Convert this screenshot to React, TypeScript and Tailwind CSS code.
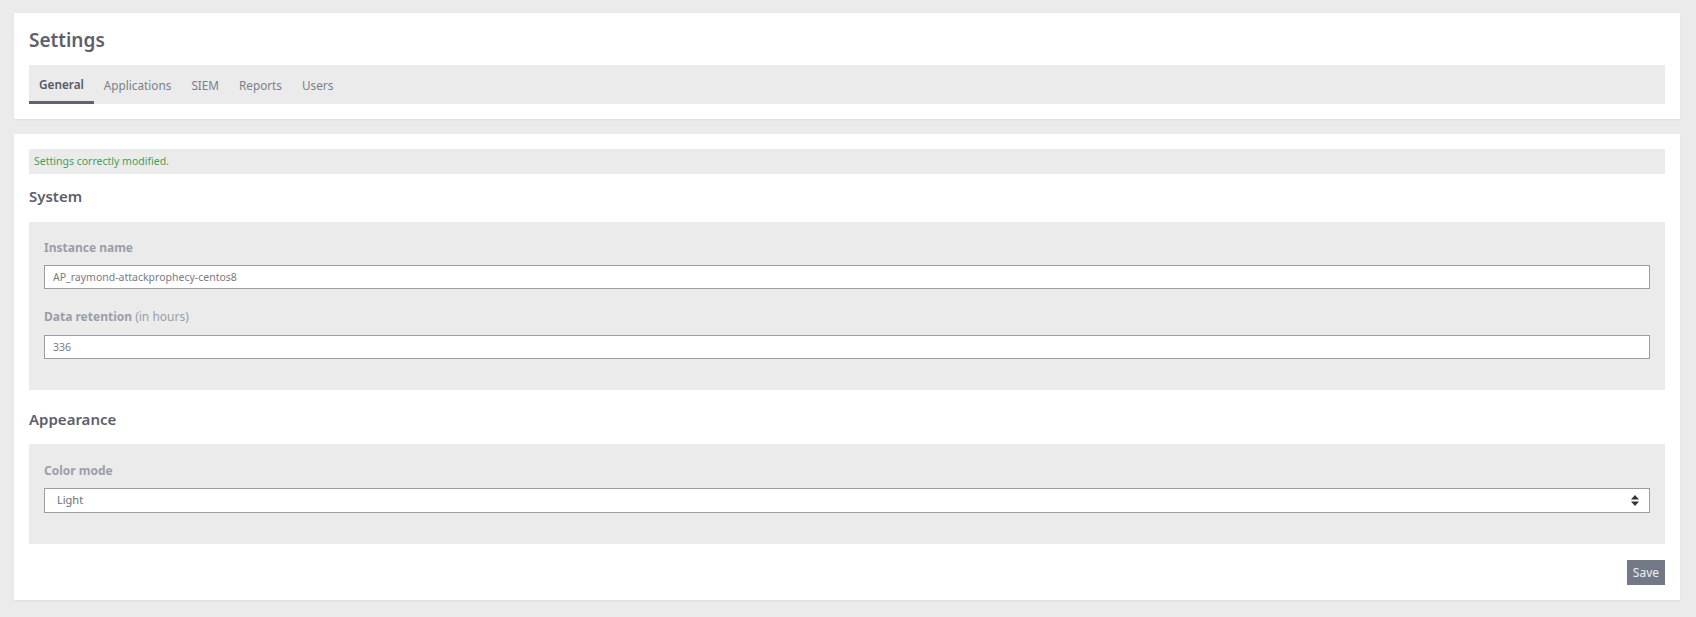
import React from "react";

const font = { fontFamily: '"Noto Sans", "DejaVu Sans", sans-serif' };

export default function App() {
  const tabs = ["General", "Applications", "SIEM", "Reports", "Users"];
  return (
    <div style={font} className="min-h-screen bg-[#ebebeb] pt-[13px] pb-[17px] pl-[14px] pr-[16px]">
      <div className="bg-white px-[15px] pt-[13px] pb-[15px] shadow-[0_1px_2px_rgba(0,0,0,0.06)]">
        <h1 className="text-[19px] leading-[28px] font-semibold text-[#5c606c]">Settings</h1>
        <div className="mt-[11px] flex h-[39px] bg-[#ebebeb]">
          {tabs.map((t, i) => (
            <div
              key={t}
              className={
                i === 0
                  ? "flex h-full items-center border-b-[3px] border-[#5f6370] px-[10px] pt-[3px] text-[11.75px] font-semibold text-[#555a66]"
                  : "flex h-full items-center px-[10px] pt-[3px] text-[11.75px] text-[#7b7f89]"
              }
            >
              {t}
            </div>
          ))}
        </div>
      </div>

      <div className="mt-[15px] bg-white px-[15px] pt-[15px] pb-[15px] shadow-[0_1px_2px_rgba(0,0,0,0.06)]">
        <div className="flex h-[25px] items-center bg-[#ebebeb] px-[5px] text-[10.5px] text-[#3f9f5c]">
          Settings correctly modified.
        </div>
        <h2 className="mt-[10px] text-[15px] leading-[24px] font-semibold text-[#5c606c]">System</h2>
        <div className="mt-[14px] bg-[#ebebeb] px-[15px] pt-[18px] pb-[31px]">
          <div className="text-[12px] leading-[16px] font-bold text-[#9a9ea8]">Instance name</div>
          <input
            readOnly
            value="AP_raymond-attackprophecy-centos8"
            style={font}
            className="mt-[9px] block h-[24px] w-full border border-[#9b9ca8] bg-white px-[8px] text-[10.5px] text-[#777b85] outline-none"
          />
          <div className="mt-[20px] text-[12px] leading-[16px] text-[#9a9ea8]">
            <span className="font-bold">Data retention</span> (in hours)
          </div>
          <input
            readOnly
            value="336"
            style={font}
            className="mt-[10px] block h-[24px] w-full border border-[#9b9ca8] bg-white px-[8px] text-[10.5px] text-[#777b85] outline-none"
          />
        </div>
        <h2 className="mt-[17px] text-[15px] leading-[24px] font-semibold text-[#5c606c]">Appearance</h2>
        <div className="mt-[13px] bg-[#ebebeb] px-[15px] pt-[19px] pb-[31px]">
          <div className="text-[12px] leading-[16px] font-bold text-[#9a9ea8]">Color mode</div>
          <div className="mt-[9px] flex h-[25px] w-full items-center justify-between border border-[#9b9ca8] bg-white pl-[12px] pr-[10px] text-[11px] text-[#6a6e78]">
            <span>Light</span>
            <svg width="8" height="11" viewBox="0 0 8 11" className="text-[#333]">
              <path d="M4 0 L8 4.5 L0 4.5 Z" fill="currentColor" />
              <path d="M4 11 L8 6.5 L0 6.5 Z" fill="currentColor" />
            </svg>
          </div>
        </div>
        <div className="mt-[16px] flex justify-end">
          <button className="h-[25px] bg-[#737887] px-[6px] text-[12px] text-[#eef0f4]">Save</button>
        </div>
      </div>
    </div>
  );
}
